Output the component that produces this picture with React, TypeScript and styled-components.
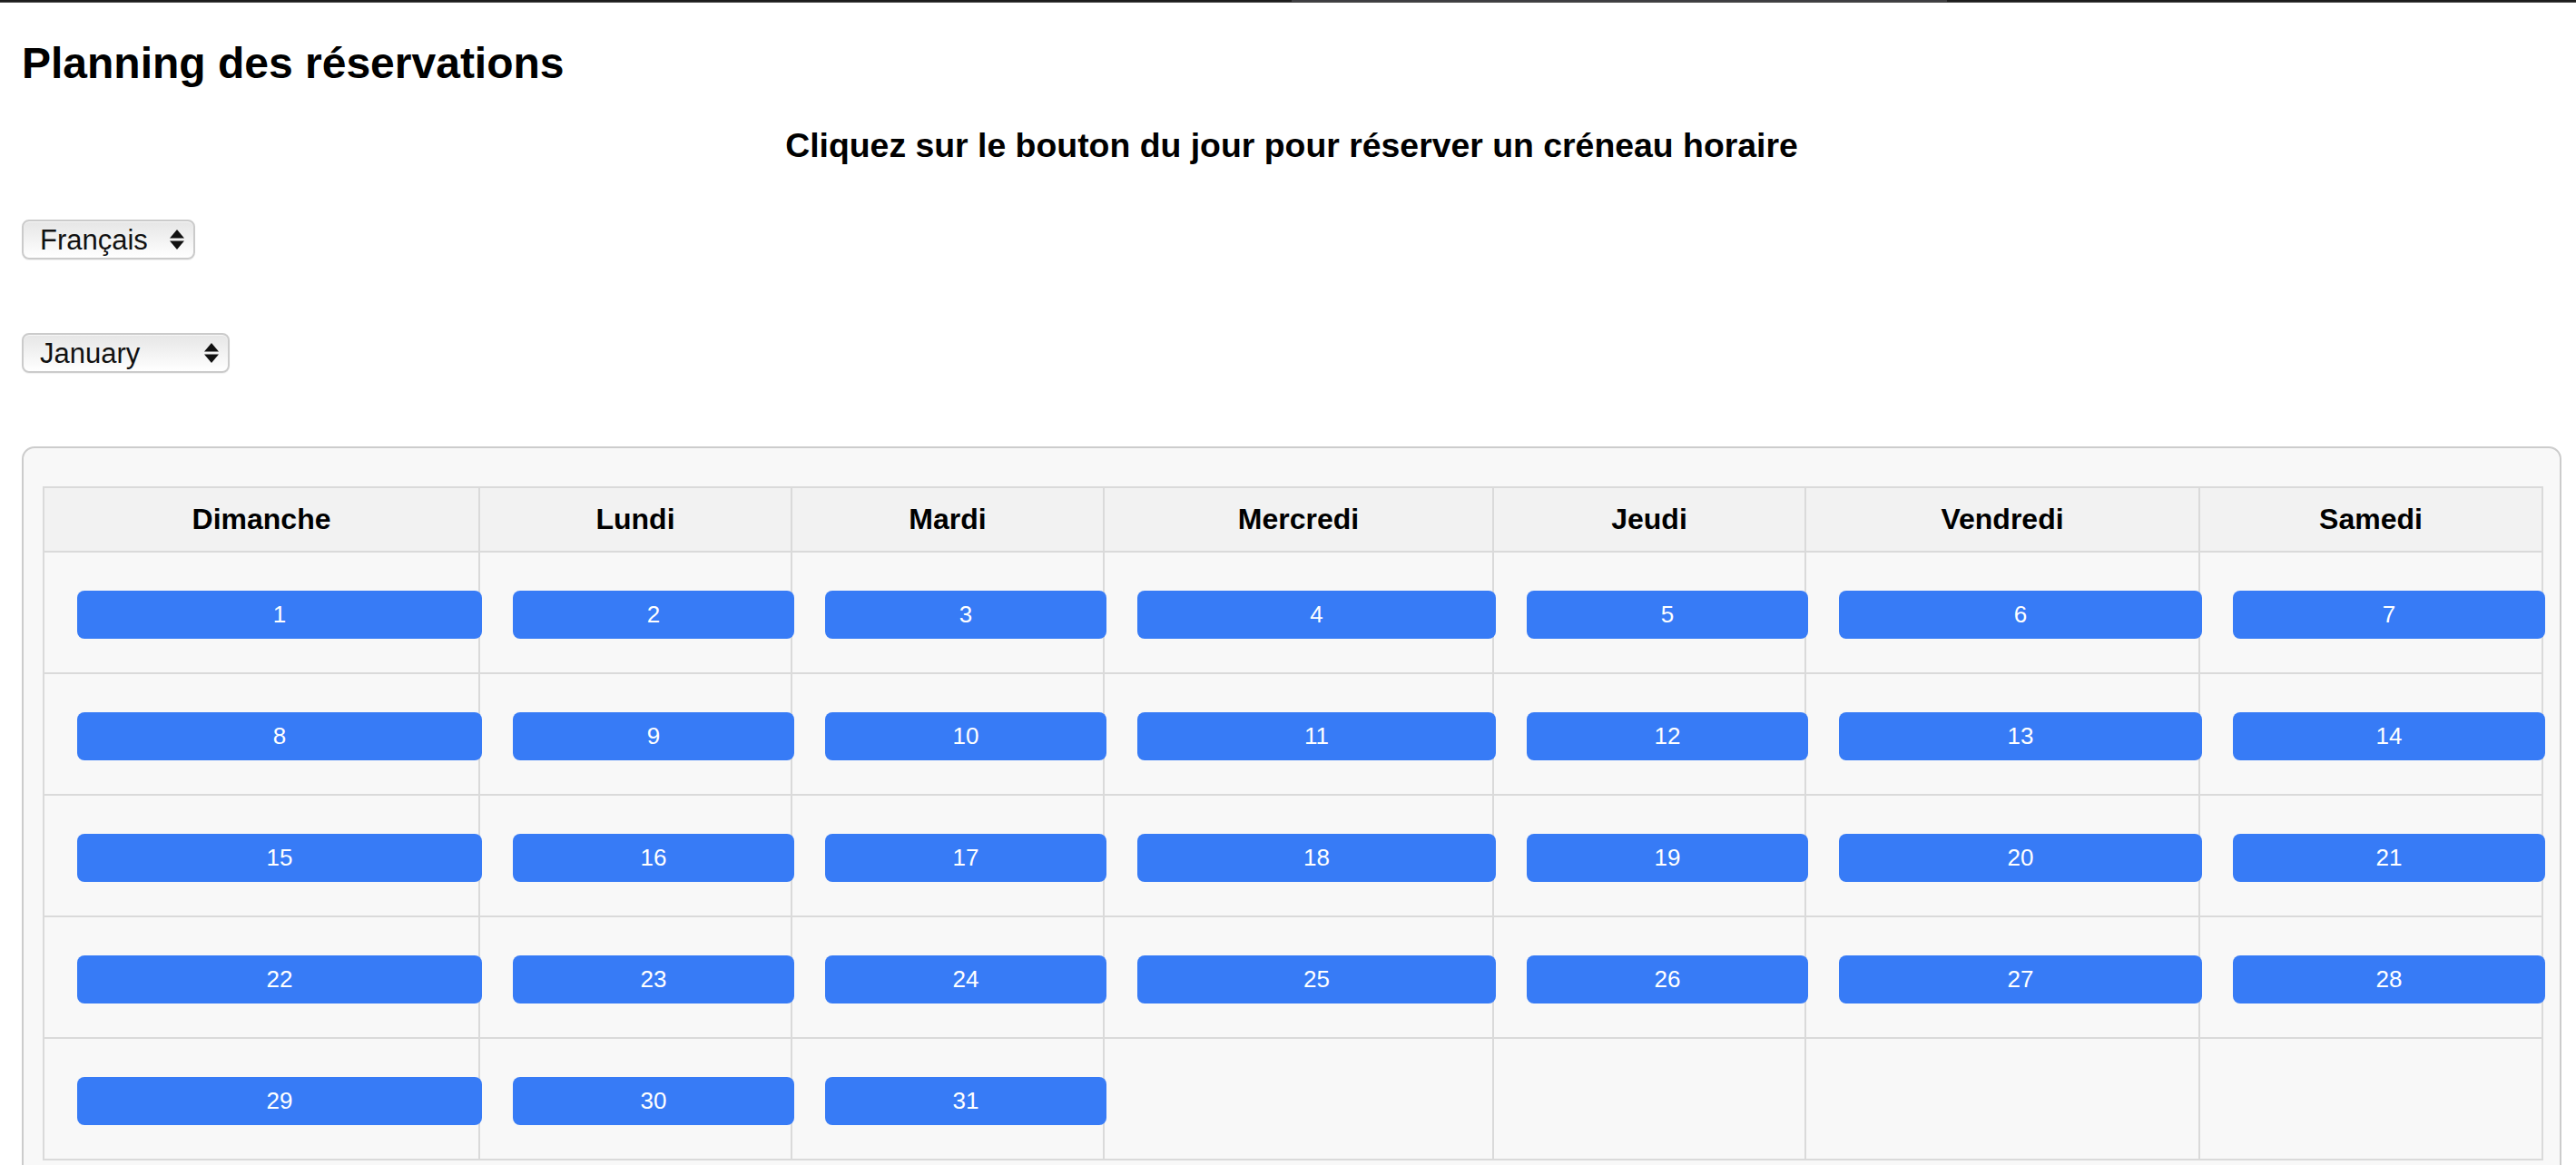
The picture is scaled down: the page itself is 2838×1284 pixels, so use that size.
import React from "react";
import styled, { createGlobalStyle } from "styled-components";

const GlobalStyle = createGlobalStyle`
  html, body {
    margin: 0;
    padding: 0;
    background: #ffffff;
    font-family: "Liberation Sans", Arial, sans-serif;
    color: #000;
  }
  * { box-sizing: border-box; }
`;

const TopBar = styled.div`
  display: flex;
  height: 3px;
  background: #1c1c1c;
  border-bottom: 1px solid #555;
`;

const TopBarSegment = styled.div<{ $w?: number; $light?: boolean }>`
  flex: ${(p) => (p.$w ? `0 0 ${p.$w}px` : "1 1 auto")};
  background: ${(p) => (p.$light ? "#3d3d40" : "#1c1c1c")};
`;

const Page = styled.main`
  padding: 39px 16px 0 24px;
`;

const Title = styled.h1`
  margin: 0;
  font-size: 48px;
  line-height: 56px;
  font-weight: 700;
`;

const Subtitle = styled.h3`
  margin: 41px 0 0;
  font-size: 37.4px;
  line-height: 43px;
  font-weight: 700;
  text-align: center;
`;

const SelectWrap = styled.div<{ $w: number; $mt: number }>`
  position: relative;
  width: ${(p) => p.$w}px;
  height: 44px;
  margin-top: ${(p) => p.$mt}px;
`;

const NativeSelect = styled.select`
  appearance: none;
  -webkit-appearance: none;
  width: 100%;
  height: 100%;
  margin: 0;
  padding: 0 36px 0 18px;
  font-family: "Liberation Sans", Arial, sans-serif;
  font-size: 31px;
  color: #111;
  border: 2px solid #cbcbcb;
  border-radius: 8px;
  background: linear-gradient(#e6e6e6 0%, #f1f1f1 45%, #fafafa 80%, #ffffff 100%);
  box-shadow: inset 0 1px 0 #f7f7f7, 0 1px 1px rgba(0, 0, 0, 0.06);
  outline: none;
`;

const Arrows = styled.svg`
  position: absolute;
  right: 12px;
  top: 50%;
  transform: translateY(-50%);
  pointer-events: none;
`;

const Panel = styled.section`
  margin-top: 81px;
  padding: 42px 21px 40px 21px;
  background: #f8f8f8;
  border: 2px solid #cccccc;
  border-radius: 14px;
`;

const Table = styled.table`
  width: 2753px;
  table-layout: fixed;
  border-collapse: collapse;
  border: 2px solid #dadada;
`;

const HeadCell = styled.th`
  height: 71px;
  padding: 0;
  background: #f2f2f2;
  border: 2px solid #dadada;
  font-size: 32px;
  font-weight: 700;
  text-align: center;
  vertical-align: middle;
`;

const DayCell = styled.td`
  height: 134px;
  padding: 0 16px;
  border: 2px solid #dadada;
  vertical-align: middle;
`;

const DayButton = styled.button`
  display: block;
  width: 100%;
  height: 53px;
  margin: 0 0 0 20px;
  padding: 0;
  border: none;
  border-radius: 8px;
  background: #377bf6;
  color: #ffffff;
  font-family: "Liberation Sans", Arial, sans-serif;
  font-size: 26px;
  cursor: pointer;
  position: relative;
  top: 2px;
`;

const days = ["Dimanche", "Lundi", "Mardi", "Mercredi", "Jeudi", "Vendredi", "Samedi"];
const widths = [480, 344, 344, 429, 344, 434, 378];

function ArrowIcon() {
  return (
    <Arrows width="16" height="22" viewBox="0 0 16 22">
      <polygon points="0,9.5 8,0 16,9.5" fill="#111" />
      <polygon points="0,12.5 16,12.5 8,22" fill="#111" />
    </Arrows>
  );
}

export default function App() {
  const weeks: (number | null)[][] = [];
  for (let w = 0; w < 5; w++) {
    const row: (number | null)[] = [];
    for (let d = 0; d < 7; d++) {
      const n = w * 7 + d + 1;
      row.push(n <= 31 ? n : null);
    }
    weeks.push(row);
  }

  return (
    <>
      <GlobalStyle />
      <TopBar>
        <TopBarSegment $w={1423} />
        <TopBarSegment $w={722} $light />
        <TopBarSegment />
      </TopBar>
      <Page>
        <Title>Planning des réservations</Title>
        <Subtitle>Cliquez sur le bouton du jour pour réserver un créneau horaire</Subtitle>
        <SelectWrap $w={191} $mt={60}>
          <NativeSelect defaultValue="fr">
            <option value="fr">Français</option>
            <option value="en">English</option>
          </NativeSelect>
          <ArrowIcon />
        </SelectWrap>
        <SelectWrap $w={229} $mt={81}>
          <NativeSelect defaultValue="January">
            <option>January</option>
            <option>February</option>
            <option>March</option>
            <option>April</option>
            <option>May</option>
            <option>June</option>
            <option>July</option>
            <option>August</option>
            <option>September</option>
            <option>October</option>
            <option>November</option>
            <option>December</option>
          </NativeSelect>
          <ArrowIcon />
        </SelectWrap>
        <Panel>
          <Table>
            <colgroup>
              {widths.map((w, i) => (
                <col key={i} style={{ width: w }} />
              ))}
            </colgroup>
            <thead>
              <tr>
                {days.map((d) => (
                  <HeadCell key={d}>{d}</HeadCell>
                ))}
              </tr>
            </thead>
            <tbody>
              {weeks.map((row, ri) => (
                <tr key={ri}>
                  {row.map((n, ci) => (
                    <DayCell key={ci}>{n !== null && <DayButton>{n}</DayButton>}</DayCell>
                  ))}
                </tr>
              ))}
            </tbody>
          </Table>
        </Panel>
      </Page>
    </>
  );
}
